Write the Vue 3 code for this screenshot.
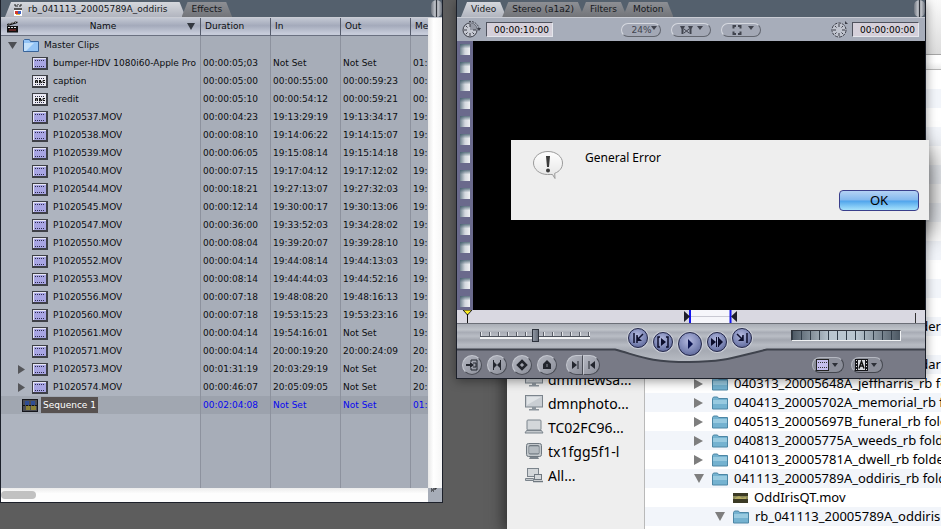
<script setup>
import { ref } from 'vue'

const name = (n) => `P10205${n}.MOV`
const clips = [
  { name: 'bumper-HDV 1080i60-Apple Pro', icon: 'clip', cells: ['00:00:05;03', 'Not Set', 'Not Set', '01:'] },
  { name: 'caption', icon: 'text', cells: ['00:00:05:00', '00:00:55:00', '00:00:59:23', '00:'] },
  { name: 'credit', icon: 'text', cells: ['00:00:05:10', '00:00:54:12', '00:00:59:21', '00:'] },
  { name: name(37), icon: 'clip', cells: ['00:00:04:23', '19:13:29:19', '19:13:34:17', '19:'] },
  { name: name(38), icon: 'clip', cells: ['00:00:08:10', '19:14:06:22', '19:14:15:07', '19:'] },
  { name: name(39), icon: 'clip', cells: ['00:00:06:05', '19:15:08:14', '19:15:14:18', '19:'] },
  { name: name(40), icon: 'clip', cells: ['00:00:07:15', '19:17:04:12', '19:17:12:02', '19:'] },
  { name: name(44), icon: 'clip', cells: ['00:00:18:21', '19:27:13:07', '19:27:32:03', '19:'] },
  { name: name(45), icon: 'clip', cells: ['00:00:12:14', '19:30:00:17', '19:30:13:06', '19:'] },
  { name: name(47), icon: 'clip', cells: ['00:00:36:00', '19:33:52:03', '19:34:28:02', '19:'] },
  { name: name(50), icon: 'clip', cells: ['00:00:08:04', '19:39:20:07', '19:39:28:10', '19:'] },
  { name: name(52), icon: 'clip', cells: ['00:00:04:14', '19:44:08:14', '19:44:13:03', '19:'] },
  { name: name(53), icon: 'clip', cells: ['00:00:08:14', '19:44:44:03', '19:44:52:16', '19:'] },
  { name: name(56), icon: 'clip', cells: ['00:00:07:18', '19:48:08:20', '19:48:16:13', '19:'] },
  { name: name(60), icon: 'clip', cells: ['00:00:07:18', '19:53:15:23', '19:53:23:16', '19:'] },
  { name: name(61), icon: 'clip', cells: ['00:00:04:14', '19:54:16:01', 'Not Set', '19:'] },
  { name: name(71), icon: 'clip', cells: ['00:00:04:14', '20:00:19:20', '20:00:24:09', '20:'] },
  { name: name(73), icon: 'clip', arrow: true, cells: ['00:01:31:19', '20:03:29:19', 'Not Set', '20:'] },
  { name: name(74), icon: 'clip', arrow: true, cells: ['00:00:46:07', '20:05:09:05', 'Not Set', '20:'] },
]

const folders = [
  '040313_20005648A_jeffharris_rb folder',
  '040413_20005702A_memorial_rb folder',
  '040513_20005697B_funeral_rb folder',
  '040813_20005775A_weeds_rb folder',
  '041013_20005781A_dwell_rb folder',
]
const hosts = [
  { name: 'dmnnewsa...', icon: 'display' },
  { name: 'dmnphoto...', icon: 'display' },
  { name: 'TC02FC96...', icon: 'laptop' },
  { name: 'tx1fgg5f1-l', icon: 'crt' },
  { name: 'All...', icon: 'network' },
]
const tabs = ['Video', 'Stereo (a1a2)', 'Filters', 'Motion']
const shuttle = ref(50)
const jog = ref(50)
const current = ref('00:00:10:00')
const duration = ref('00:00:00:00')
</script>

<template>
  <main class="desktop">
    <section class="finder" aria-label="Files">
      <nav class="sidebar">
        <a v-for="h in hosts" :key="h.name" href="#" class="host">
          <svg v-if="h.icon === 'display'" width="20" height="18" viewBox="0 0 20 18">
            <rect x="1.5" y="1.5" width="17" height="11.5" fill="#c9ced3" stroke="#7b848c" />
            <path d="M3 3h14L3 11z" fill="#dfe3e6" /><path d="M8 13h4v2h3v1.500H5V15h3z" fill="#8b949c" />
          </svg>
          <svg v-else-if="h.icon === 'laptop'" width="20" height="18" viewBox="0 0 20 18">
            <rect x="3" y="2" width="14" height="10" rx="1" fill="#d3d7da" stroke="#7b848c" />
            <path d="M2.500 12.500h15l1.500 2.500H1z" fill="#c3c8cc" stroke="#7b848c" />
          </svg>
          <svg v-else-if="h.icon === 'crt'" width="20" height="18" viewBox="0 0 20 18">
            <rect x="2.500" y="1.500" width="15" height="13" rx="2" fill="#c3c8cc" stroke="#6f7880" />
            <rect x="5" y="3.500" width="10" height="8.500" rx="1" fill="#9fa7ad" stroke="#6f7880" />
            <path d="M5 6h10M5 8h10M5 10h10" stroke="#c9ced3" /><path d="M6 15h8l1 2H5z" fill="#7b848c" />
          </svg>
          <svg v-else width="20" height="18" viewBox="0 0 20 18">
            <rect x="3.500" y="2.500" width="11" height="8" fill="#d3d7da" stroke="#7b848c" />
            <path d="M1.500 12.500h8v2h-8z" fill="#c3c8cc" stroke="#7b848c" />
            <rect x="10.500" y="8.500" width="7" height="5" fill="#d3d7da" stroke="#6f7880" />
            <path d="M9 15.500h10" stroke="#6f7880" stroke-width="1.500" />
          </svg>
          <span>{{ h.name }}</span>
        </a>
      </nav>
      <div class="files">
        <div class="files-top"></div>
        <div class="files-head"></div>
        <ul class="file-list">
          <li v-for="n in 13" :key="n"></li>
          <li class="tail">der</li>
          <li></li>
          <li class="tail">dar</li>
          <li v-for="f in folders" :key="f">
            <svg class="tri" width="10" height="10" viewBox="0 0 10 10"><path d="M0 0l9 5-9 5z" fill="#7e7e7e" /></svg>
            <svg class="folder" width="18" height="14" viewBox="0 0 18 14">
              <path d="M1.500 13V2.500l1-1.500h4l1 1.500h9V13z" fill="#74b2d0" stroke="#4c86a5" /><path d="M2 4h14v4H2z" fill="#98cae0" />
            </svg>
            <span>{{ f }}</span>
          </li>
          <li>
            <svg class="tri" width="10" height="9" viewBox="0 0 10 9"><path d="M0 0h10L5 9z" fill="#7e7e7e" /></svg>
            <svg class="folder" width="18" height="14" viewBox="0 0 18 14">
              <path d="M1.500 13V2.500l1-1.500h4l1 1.500h9V13z" fill="#74b2d0" stroke="#4c86a5" /><path d="M2 4h14v4H2z" fill="#98cae0" />
            </svg>
            <span>041113_20005789A_oddiris_rb folder</span>
          </li>
          <li class="movie">
            <svg width="15" height="10" viewBox="0 0 15 10">
              <rect width="15" height="10" fill="#3b3a25" /><path d="M0 3h15v3H0z" fill="#8b8a5a" /><path d="M2 5l4-2 3 2 4-1v2H2z" fill="#b3aa62" />
            </svg>
            <span>OddIrisQT.mov</span>
          </li>
          <li class="nested">
            <svg class="tri" width="10" height="9" viewBox="0 0 10 9"><path d="M0 0h10L5 9z" fill="#7e7e7e" /></svg>
            <svg class="folder" width="18" height="14" viewBox="0 0 18 14">
              <path d="M1.500 13V2.500l1-1.500h4l1 1.500h9V13z" fill="#74b2d0" stroke="#4c86a5" /><path d="M2 4h14v4H2z" fill="#98cae0" />
            </svg>
            <span>rb_041113_20005789A_oddiris</span>
          </li>
        </ul>
      </div>
    </section>

    <section class="browser" aria-label="Browser">
      <div class="tabs">
        <button class="tab active">
          <svg width="10" height="12" viewBox="0 0 10 12">
            <path d="M1 1h2M4 0h2M7 1h2M2 2h3M6 2h2" stroke="#222" /><rect x="1" y="4" width="8" height="8" fill="#fff" />
            <rect x="1" y="4" width="8" height="2" fill="#555" /><rect x="2" y="7" width="3" height="3" fill="#d33a2c" /><rect x="5" y="7" width="3" height="3" fill="#3b5fc0" /><rect x="3" y="10" width="4" height="1" fill="#e6b437" />
          </svg>
          rb_041113_20005789A_oddiris
        </button>
        <button class="tab">Effects</button>
        <span class="grip"></span>
      </div>
      <div class="bin">
        <div class="grid">
          <table>
            <colgroup><col class="c-name" /><col class="c-time" /><col class="c-time" /><col class="c-time" /><col /></colgroup>
            <thead>
              <tr>
                <th>
                  <div class="name-head">
                    <svg width="13" height="13" viewBox="0 0 13 13">
                      <path d="M1 4L11 1l.6 2L1.600 6z" fill="#111" /><path d="M3 4.500l2-2M6 3.600l2-2M9 2.800l1.500-1.500" stroke="#ddd" />
                      <rect x="1" y="6" width="11" height="6.500" fill="#111" /><path d="M2 7.500h9" stroke="#ddd" stroke-dasharray="2 1" /><path d="M3 10h7" stroke="#a33" />
                    </svg>
                    <span>Name</span>
                    <svg width="8" height="7" viewBox="0 0 8 7"><path d="M0 0h8L4 7z" fill="#333840" /></svg>
                  </div>
                </th>
                <th>Duration</th><th>In</th><th>Out</th><th>Me</th>
              </tr>
            </thead>
            <tbody>
              <tr>
                <td>
                  <div class="cell bin-row">
                    <svg width="10" height="7" viewBox="0 0 10 7"><path d="M0 0h9L4.500 7z" fill="#4d4f54" /></svg>
                    <svg width="16" height="13" viewBox="0 0 16 13">
                      <path d="M.500 12.500V1.500L1.500.500h5l1 2h8v10z" fill="#94c4f6" stroke="#39649a" /><path d="M1 4h10L3 12H1z" fill="#c4e1fb" />
                    </svg>
                    <span>Master Clips</span>
                  </div>
                </td>
                <td></td><td></td><td></td><td></td>
              </tr>
              <tr v-for="c in clips" :key="c.name">
                <td>
                  <div class="cell clip-row">
                    <svg class="disclose" width="7" height="9" viewBox="0 0 7 9"><path v-if="c.arrow" d="M0 0l7 4.500L0 9z" fill="#55565a" /></svg>
                    <svg width="16" height="13" viewBox="0 0 16 13">
                      <rect width="16" height="13" fill="#3e4047" /><rect x="1" y="1" width="13" height="10" fill="#e6e6f4" />
                      <rect x="2" y="2" width="12" height="9" :fill="c.icon === 'clip' ? '#a9a6e4' : '#ececf2'" />
                      <path d="M3 3.500h10M3 9.500h10" stroke="#2c2c4c" stroke-dasharray="1 1" />
                      <path v-if="c.icon === 'text'" d="M3.500 8V5.500h2V8M3.500 7h2M7.500 5v3M7 5.500h2M7 6.500h2M9.500 6.500V8M7 7.800h2M13 5.500h-2v2h2" fill="none" stroke="#111" />
                    </svg>
                    <span class="clip-name">{{ c.name }}</span>
                  </div>
                </td>
                <td v-for="(t, i) in c.cells" :key="i">{{ t }}</td>
              </tr>
              <tr class="selected">
                <td>
                  <div class="cell seq-row">
                    <svg width="16" height="13" viewBox="0 0 16 13">
                      <rect width="16" height="13" fill="#15161c" /><rect x="1" y="1" width="14" height="11" fill="#4b4c52" />
                      <rect x="3" y="2" width="4" height="4" fill="#2f4d94" /><rect x="9" y="2" width="4" height="4" fill="#2f4d94" />
                      <rect x="4" y="7" width="4" height="4" fill="#8b8136" /><rect x="9" y="7" width="5" height="4" fill="#8b8136" /><path d="M1 6.500h14" stroke="#111" stroke-dasharray="2 1" />
                    </svg>
                    <span class="seq-name">Sequence 1</span>
                  </div>
                </td>
                <td>00:02:04:08</td><td>Not Set</td><td>Not Set</td><td>01:</td>
              </tr>
              <tr class="filler"><td></td><td></td><td></td><td></td><td></td></tr>
            </tbody>
          </table>
        </div>
        <div class="gutter"></div>
      </div>
      <div class="hscroll">
        <span class="thumb"></span>
        <span class="corner"><svg width="6" height="4" viewBox="0 0 6 4"><path d="M0 1h1M2 1h1M1 2h1M4 0h2M3 1h2M0 3h1M2 3h1" stroke="#111" /></svg></span>
      </div>
    </section>

    <section class="viewer" aria-label="Viewer">
      <div class="tabs">
        <button v-for="(t, i) in tabs" :key="t" class="tab" :class="{ active: i === 0 }">{{ t }}</button>
        <span class="grip"></span>
      </div>
      <div class="toolbar">
        <div class="group">
          <svg width="20" height="19" viewBox="0 0 20 19">
            <circle cx="8" cy="10" r="7" fill="#c6c9d2" stroke="#3b3d47" /><path d="M8 10V3a7 7 0 017 7z" fill="#9599a5" />
            <path d="M8 4v3M8 13v3M2 10h3M11 10h3M4 6l1.500 1.500M12 14l-1.500-1.500M4 14l1.500-1.500" stroke="#3b3d47" />
            <path d="M7 1.500a9 9 0 0110 7" fill="none" stroke="#3b3d47" stroke-dasharray="2 1" /><path d="M15 8h4l-2 3z" fill="#3b3d47" />
          </svg>
          <input v-model="current" class="timecode" aria-label="Timecode duration" />
        </div>
        <div class="group middle">
          <span class="zoom">
            <select class="pill" aria-label="Zoom"><option>24%</option></select>
            <svg width="6" height="4" viewBox="0 0 6 4"><path d="M0 0h6L3 4z" fill="#41444e" /></svg>
          </span>
          <button class="pill" aria-label="Playhead sync">
            <svg width="26" height="10" viewBox="0 0 26 10">
              <path d="M2 1h5L5.500 4v5h-2V4zM10 1h5L13.500 4v5h-2V4z" fill="#41444e" /><path d="M6 4l5 4M11 4L6 8" stroke="#41444e" /><path d="M19 1h6l-3 4z" fill="#41444e" />
            </svg>
          </button>
          <button class="pill" aria-label="View options">
            <svg width="26" height="10" viewBox="0 0 26 10">
              <path d="M6 0h3.500v3.500h-2V2H6zM4 0H.500v3.500h2V2H4zM.500 6.500V10H4V8H2.500V6.500zM9.500 6.500V10H6V8h1.500V6.500z" fill="#41444e" transform="translate(4)" /><path d="M20 1h6l-3 4z" fill="#41444e" />
            </svg>
          </button>
        </div>
        <div class="group end">
          <svg width="17" height="17" viewBox="0 0 17 17">
            <circle cx="8" cy="9" r="7" fill="#c0c4ce" stroke="#3b3d47" stroke-dasharray="3 1" />
            <path d="M8 3v3M8 12v3M2 9h3M11 9h3M4 5l1.500 1.500M12 13l-1.500-1.500M4 13l1.500-1.500M12 5l-1.500 1.500" stroke="#3b3d47" /><path d="M14 0l3 3h-3z" fill="#3b3d47" />
          </svg>
          <input v-model="duration" class="timecode" aria-label="Current timecode" />
        </div>
      </div>
      <div class="stage">
        <div class="film"><i v-for="n in 15" :key="n"></i></div>
      </div>
      <svg class="timeline" viewBox="0 0 468 14" preserveAspectRatio="none">
        <rect width="468" height="14" fill="#d9d8e1" /><rect x="233" width="41" height="13" fill="#f6f6fb" />
        <path d="M234 6.500h39" stroke="#c9c9d3" /><path d="M233 0v13M273.500 0v13" stroke="#1414ee" stroke-width="2" />
        <path d="M227 1l6 5.500-6 5.500zM280 1l-6 5.500 6 5.500z" fill="#1c1c28" />
        <path d="M6 0h9l-4.500 5z" fill="#ffee20" stroke="#222" /><path d="M10.500 4v9" stroke="#111" /><path d="M458.500 3v10" stroke="#333" />
        <path d="M0 13.500h468" stroke="#6c6f78" />
      </svg>
      <div class="deck">
        <svg class="deck-bg" viewBox="0 0 468 54" preserveAspectRatio="none">
          <defs>
            <linearGradient id="metal" x2="0" y2="1">
              <stop offset="0" stop-color="#a9adb6" /><stop offset=".15" stop-color="#bfc3ca" /><stop offset=".22" stop-color="#a8acb5" /><stop offset=".32" stop-color="#b9bdc5" /><stop offset=".42" stop-color="#a2a6af" /><stop offset=".55" stop-color="#b7bbc3" /><stop offset=".7" stop-color="#a6aab3" /><stop offset="1" stop-color="#b8bcc4" />
            </linearGradient>
          </defs>
          <rect width="468" height="54" fill="#787a86" />
          <path d="M0 0h468v25H310C280 32 272 38 232 38S184 32 158 25H0z" fill="url(#metal)" />
          <path d="M0 25.500h158c26 7 34 12.500 74 12.500s48-6 78-12.500h158" fill="none" stroke="#3f434d" stroke-width="2" />
        </svg>
        <div class="deck-grid">
          <input v-model="shuttle" class="shuttle" type="range" aria-label="Shuttle" />
          <div class="transport">
            <button aria-label="Previous edit"><svg width="14" height="14" viewBox="0 0 14 14"><path d="M3 2v10M6 4v8M12 3L8 7" stroke="#0c0e2c" stroke-width="1.500" /><path d="M6 5v5h5z" fill="#0c0e2c" /></svg></button>
            <button class="low" aria-label="Play in to out"><svg width="14" height="14" viewBox="0 0 14 14"><path d="M4 2H2v10h2M10 2h2v10h-2" fill="none" stroke="#0c0e2c" stroke-width="1.500" /><path d="M5 3l5 4-5 4z" fill="#0c0e2c" /></svg></button>
            <button class="play" aria-label="Play"><svg width="14" height="14" viewBox="0 0 14 14"><path d="M5 2l5 5-5 5z" fill="#0c1550" /></svg></button>
            <button class="low" aria-label="Play around"><svg width="14" height="14" viewBox="0 0 14 14"><path d="M6.500 2v10M8.500 2v10" stroke="#0c0e2c" stroke-width="1" /><path d="M1 3l5 4-5 4zM9 3l4 4-4 4z" fill="#0c0e2c" /></svg></button>
            <button aria-label="Next edit"><svg width="14" height="14" viewBox="0 0 14 14"><path d="M12 2v10M8 4v6M2 3l4 4" stroke="#0c0e2c" stroke-width="1.500" /><path d="M8 5v5H3z" fill="#0c0e2c" /></svg></button>
          </div>
          <input v-model="jog" class="jog" type="range" aria-label="Jog" />
          <div class="marks">
            <button aria-label="Match frame"><svg width="12" height="12" viewBox="0 0 12 12"><path d="M5 3V1h6v10H5V9M7 4h3v4H7" fill="none" stroke="#23262e" /><path d="M0 5h4V3l4 3-4 3V7H0z" fill="#23262e" /></svg></button>
            <button aria-label="Mark clip"><svg width="12" height="12" viewBox="0 0 12 12"><path d="M2 2l4 4 4-4v8L6 6l-4 4z" fill="#23262e" /><path d="M2.500 1v10M9.500 1v10" stroke="#23262e" /></svg></button>
            <button aria-label="Add keyframe"><svg width="12" height="12" viewBox="0 0 12 12"><path d="M6 2l4 4-4 4-4-4z" fill="none" stroke="#23262e" stroke-width="2.500" /></svg></button>
            <button aria-label="Add marker"><svg width="12" height="12" viewBox="0 0 12 12"><path d="M2 10V5l4-4 4 4v5z" fill="#23262e" /><path d="M6 5v3" stroke="#8b8e98" /></svg></button>
            <span class="pair">
              <button aria-label="Mark in"><svg width="12" height="12" viewBox="0 0 12 12"><path d="M3 2l5 4-5 4z" fill="#23262e" /><path d="M9 2v8" stroke="#23262e" /></svg></button>
              <button aria-label="Mark out"><svg width="12" height="12" viewBox="0 0 12 12"><path d="M9 2L4 6l5 4z" fill="#23262e" /><path d="M3 2v8" stroke="#23262e" /></svg></button>
            </span>
          </div>
          <div class="menus">
            <button aria-label="Recent clips">
              <svg width="24" height="12" viewBox="0 0 24 12"><rect x=".500" y=".500" width="12" height="11" fill="#c5bfee" stroke="#222" /><path d="M2 3.500h9M2 8.500h9" stroke="#333" stroke-dasharray="1 1" /><path d="M16 4h6l-3 4z" fill="#2d3038" /></svg>
            </button>
            <button aria-label="Generators">
              <svg width="24" height="12" viewBox="0 0 24 12"><rect width="13" height="12" fill="#15161a" /><rect x="3" y="1" width="7" height="10" fill="#d6d8dd" /><path d="M1.500 1v10M11.500 1v10" stroke="#ddd" stroke-dasharray="1 2" /><path d="M4 9.500l2.500-7 2.500 7M5 7h3" fill="none" stroke="#111" stroke-width="1.500" /><path d="M16 4h6l-3 4z" fill="#2d3038" /></svg>
            </button>
          </div>
        </div>
      </div>
    </section>

    <section class="alert" role="alertdialog" aria-label="General Error">
      <svg width="32" height="30" viewBox="0 0 32 30">
        <defs><linearGradient id="bubble" x2="0" y2="1"><stop offset="0" stop-color="#fff" /><stop offset="1" stop-color="#e4e4e4" /></linearGradient></defs>
        <path d="M16 1.500C8 1.500 1.500 6.500 1.500 13S8 24.500 15.500 24.500c1.800 0 3.500-.2 5 0L23 28.500l-.3-5.200C27.500 21.500 30.500 18 30.500 13 30.500 6.500 24 1.500 16 1.500z" fill="url(#bubble)" stroke="#9a9a9a" />
        <path d="M14 6h4l-1 11h-2z" fill="#3b3b3b" /><circle cx="16" cy="20.500" r="2" fill="#3b3b3b" />
      </svg>
      <p>General Error</p>
      <button>OK</button>
    </section>
  </main>
</template>

<style>
body { background: #5d5d5d; }
</style>

<style scoped>
* { box-sizing: border-box; }
button, input, select { margin: 0; padding: 0; border: 0; font: inherit; color: inherit; }
svg { display: block; flex: none; }
.desktop {
  position: relative;
  min-height: 100vh;
  overflow: hidden;
  background: #5d5d5d;
  color: #0c0d10;
  font: 9px/18px "DejaVu Sans", sans-serif;
}

/* Window placement on the desktop */
.finder { position: absolute; top: 0; bottom: 0; left: 507px; right: 0; }
.browser { position: absolute; top: 0; bottom: 26px; left: 0; width: 443px; }
.viewer { position: absolute; top: 0; left: 456px; right: 15px; }
.alert { position: absolute; top: 140px; left: 511px; right: 12px; }

.finder {
  display: flex;
  overflow: hidden;
  background: #fff;
  color: #000;
  font: 13px/19px "Noto Sans", sans-serif;
  box-shadow: 0 0 14px 3px #2b2b2b;
}
.sidebar {
  display: flex;
  flex: none;
  flex-direction: column;
  justify-content: flex-end;
  width: 138px;
  padding: 0 0 42px 17px;
  background: #eeeeee;
  border-right: 1px solid #b9b9b9;
}
.host { display: flex; align-items: center; gap: 4px; height: 24px; color: #000; font-size: 14px; text-decoration: none; }
.files { flex: 1; min-width: 0; }
.files-top { height: 55px; background: linear-gradient(#fafafa, #dcdcdc); border-bottom: 1px solid #a5a5a5; }
.files-head { height: 15px; background: linear-gradient(#fff 50%, #ececec); border-bottom: 1px solid #b5b5b5; }
.file-list { margin: 0; padding: 0; list-style: none; }
.file-list li { display: flex; align-items: center; height: 19px; padding-left: 49px; white-space: nowrap; }
.file-list li:nth-child(even) { background: #f2f5fa; }
.file-list .folder { margin: 0 5px 0 7px; }
.file-list .tail { justify-content: flex-end; }
.file-list .movie { gap: 6px; padding-left: 88px; }
.file-list .nested { padding-left: 70px; }

/* Tabs shared by the editing windows */
.tabs { display: flex; flex: none; align-items: flex-end; height: 18px; padding-left: 4px; background: #54606d; border-bottom: 1px solid #c9ccd4; }
.tab {
  display: flex;
  align-items: center;
  gap: 5px;
  height: 15px;
  padding: 0 10px;
  margin-right: -4px;
  background: linear-gradient(#8d8f94, #727479);
  clip-path: polygon(6px 0, calc(100% - 6px) 0, 100% 100%, 0 100%);
  color: #16181c;
  line-height: 15px;
  white-space: nowrap;
}
.tab.active { background: linear-gradient(#d6d8dd, #b1b5bf); }
.browser .tab.active { padding: 0 18px 0 8px; }
.grip { width: 11px; height: 17px; margin-left: auto; border-radius: 6px; background: linear-gradient(90deg, #6f757f, #c9ccd2 40%, #30343c 45% 55%, #c9ccd2 60%, #6f757f); }

.browser { display: flex; flex-direction: column; border: solid #1c202a; border-width: 0 1px 1px; }
.bin { display: flex; flex: 1; min-height: 0; }
.grid { flex: 1; min-width: 0; overflow: hidden; background: #a7adb8; }
.gutter { flex: none; width: 14px; background: linear-gradient(90deg, #e8e8e8, #fff 40%, #f6f6f6); }
table { width: 100%; height: 100%; table-layout: fixed; border-spacing: 0; }
.c-name { width: 199px; }
.c-time { width: 70px; }
tr { height: 18px; }
tr.filler { height: auto; }
th, td { padding: 0 0 0 2px; overflow: hidden; border-left: 1px solid #8d929e; text-align: left; white-space: nowrap; font-weight: normal; }
th { padding-left: 4px; background: linear-gradient(#c3c8d3, #a4aabb 45%, #c6cbd9 90%); border-left-color: #565c6c; border-bottom: 1px solid #6a7080; line-height: 17px; }
td:first-child { padding: 0; border-left: 0; background: #aeb4bf; }
th:first-child { padding: 0 5px; border-left: 0; }
.name-head { display: flex; align-items: center; justify-content: space-between; }
.cell { display: flex; align-items: center; height: 18px; overflow: hidden; }
.clip-name { min-width: 0; overflow: hidden; }
.bin-row { gap: 5px; padding-left: 7px; }
.clip-row { gap: 5px; padding-left: 17px; }
.clip-row .disclose { margin-right: 2px; }
.seq-row { gap: 3px; padding-left: 21px; }
.seq-name { height: 16px; padding: 0 2px; background: #575150; color: #fff; line-height: 16px; }
.selected td { background: #9ca2ad; color: #0808f0; }
.selected td:first-child { background: #a1a7b1; }
.hscroll { display: flex; flex: none; align-items: center; height: 14px; background: linear-gradient(#ececec, #fdfdfd 40%); }
.thumb { width: 35px; height: 8px; border-radius: 4px; background: #c1c1c1; }
.corner { width: 14px; height: 14px; margin-left: auto; padding-left: 3px; background: #a7adb8; }

.viewer { border: solid #1c202a; border-width: 0 1px 1px; box-shadow: 0 2px 10px #0006; }
.toolbar { display: grid; grid-template-columns: 1fr auto 1fr; align-items: center; height: 23px; padding: 0 6px 0 5px; background: #a7adba; }
.group { display: flex; align-items: center; gap: 4px; }
.middle { gap: 10px; }
.end { justify-content: flex-end; }
.timecode { width: 67px; height: 15px; padding-left: 7px; background: #d5d0da; border: 1px solid; border-color: #50535e #e4e6ec #e4e6ec #50535e; color: #000; }
.pill { display: flex; align-items: center; justify-content: center; width: 40px; height: 14px; border: 1px solid; border-color: #d6d9e0 #62666f #62666f #d6d9e0; border-radius: 7px; background: #a3a8b5; line-height: 12px; }
.zoom { display: grid; align-items: center; }
.zoom > * { grid-area: 1 / 1; }
.zoom .pill { appearance: none; padding-left: 10px; color: #41444e; }
.zoom svg { justify-self: end; margin: 0 4px 4px 0; pointer-events: none; }
.stage { height: 269px; background: #000; }
.film { display: flex; flex-direction: column; justify-content: space-between; width: 16px; height: 100%; padding: 3px 3px 3px; background: #6a6a8c; }
.film i { width: 10px; height: 11px; background: linear-gradient(#3f5a6acc, transparent 40%), linear-gradient(90deg, #70838f, #d3d8de 50%, #eef0f3); }
.timeline { width: 100%; height: 14px; }
.deck { display: grid; height: 54px; }
.deck > * { grid-area: 1 / 1; width: 100%; height: 54px; min-width: 0; }
.deck-grid { z-index: 1; display: grid; grid-template: 25px 29px / 1fr auto 1fr; }
.shuttle { grid-area: 1 / 1; width: 110px; height: 13px; margin: 5px 0 0 23px; appearance: none; background: linear-gradient(#f2f3f5, #f2f3f5) 0 8px / 100% 2px no-repeat, linear-gradient(#4d525c, #4d525c) 0 7px / 100% 1px no-repeat, repeating-linear-gradient(90deg, #595d67 0 1px, #e6e8ec 1px 2px, transparent 2px 9px) 0 3px / 110px 4px no-repeat; }
.shuttle::-webkit-slider-thumb { appearance: none; width: 7px; height: 13px; background: linear-gradient(90deg, #8e95a1, #666d79); border: 1px solid #2e333d; }
.transport { grid-area: 1 / 2 / 3 / 3; display: flex; gap: 5px; align-items: flex-start; padding-top: 4px; margin-right: 2px; }
.transport button { display: grid; place-items: center; width: 20px; height: 20px; border: 1px solid #22264a; border-radius: 50%; background: radial-gradient(circle at 45% 35%, #b3b9df, #7680b0 60%, #4a5282); box-shadow: 0 0 0 1px #c9ccd6; }
.transport .low { margin-top: 4px; }
.transport .play { width: 24px; height: 24px; margin-top: 4px; }
.jog { grid-area: 1 / 3; justify-self: end; width: 110px; height: 11px; margin: 6px 24px 0 0; appearance: none; border: 1px solid; border-color: #30343c #f0f2f4 #f0f2f4 #30343c; background: linear-gradient(90deg, #303b47cc, transparent 35% 60%, #303b47cc), repeating-linear-gradient(90deg, #2f3c48 0 1px, #b9c6d0 1px 9px); }
.jog::-webkit-slider-thumb { appearance: none; width: 0; height: 9px; }
.marks { grid-area: 2 / 1; display: flex; gap: 5px; padding: 6px 0 0 5px; }
.marks button { display: grid; place-items: center; flex: none; width: 20px; height: 20px; border: 1px solid; border-color: #c5c8d0 #4a4d56 #4a4d56 #c5c8d0; border-radius: 50%; background: linear-gradient(135deg, #b3b6c0, #8c8f9a); }
.pair { display: flex; margin-left: 4px; }
.marks .pair button { width: 17px; border-radius: 10px 0 0 10px; }
.marks .pair button + button { border-radius: 0 10px 10px 0; }
.menus { grid-area: 2 / 3; display: flex; gap: 7px; align-items: center; justify-content: flex-end; padding: 2px 42px 0 0; }
.menus button { display: grid; place-items: center; width: 32px; height: 16px; border: 1px solid; border-color: #b5b8c1 #44474f #44474f #b5b8c1; border-radius: 8px; background: #8b8e99; }

.alert { display: flex; align-items: flex-start; height: 80px; padding: 10px 10px 9px 21px; background: #eeeeee; color: #000; font: 12px/16px "Noto Sans", sans-serif; box-shadow: 0 12px 24px 2px #0009; }
.alert p { flex: 1; margin: 0 0 0 21px; }
.alert button { align-self: flex-end; width: 80px; height: 21px; border: 1px solid #3a3f8c; border-radius: 4px; background: linear-gradient(#b4d2f4, #83b8ee 48%, #4fa4ec 52%, #a6e2fb); font-size: 13px; line-height: 17px; }
</style>
